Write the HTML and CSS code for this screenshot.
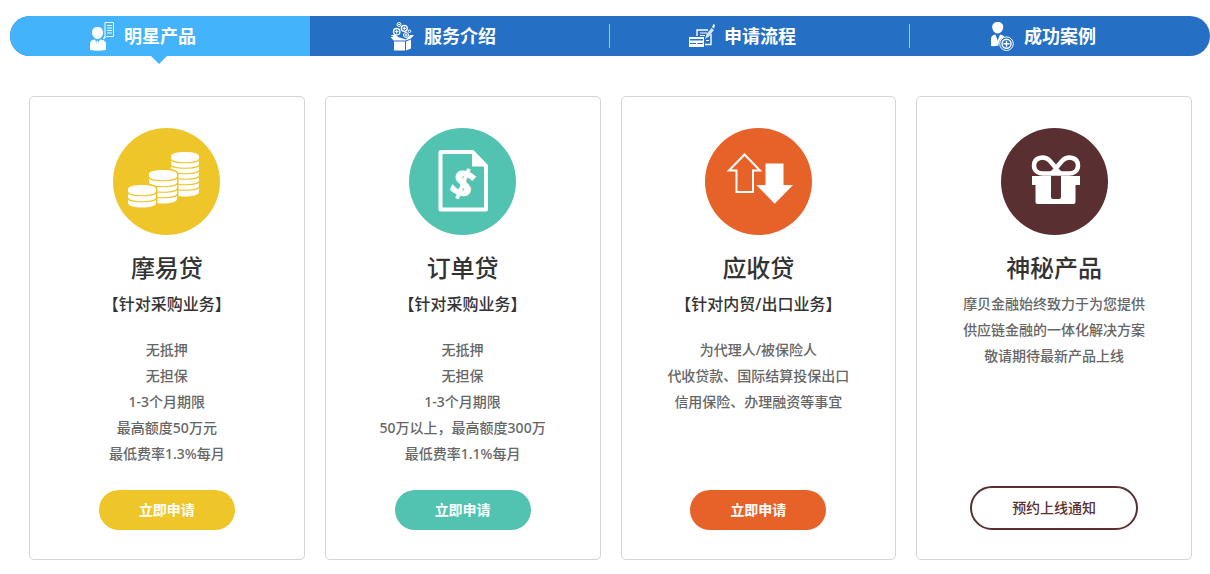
FILE: index.html
```
<!DOCTYPE html>
<html lang="zh-CN">
<head>
    <meta charset="UTF-8">
    <meta name="viewport" content="width=device-width, initial-scale=1.0">
    <title>明星产品</title>
    <link rel="stylesheet" href="styles.css">
</head>
<body>
<nav class="tabs">
    <a class="tab active" href="#products">
        <svg class="tab-icon" viewBox="0 0 26 30" fill="#fff" aria-hidden="true">
            <path d="M8.500 6c3.500 0 5.500 2 5.500 5.500s-2.500 6.500-5.500 6.500S3 15 3 11.500 5 6 8.500 6z"/>
            <path d="M1 29v-6c0-3 2-4 5-4.500l2.500 6 2.500-6c3.500.5 6 1.500 6 4.500v6q-8 1.500-16 0z"/>
            <path d="M8.500 19.500l1.200 1.300-.8 5h-.8l-.8-5z"/>
            <path d="M16 1.500h8.500v14h-7L14.500 18l1.500-3.500z" fill="none" stroke="#fff"/>
            <path d="M18 4.500h5M18 7h5M18 9.500h5M18 12h5" stroke="#fff"/>
        </svg>
        <span class="tab-text">明星产品</span>
    </a>
    <a class="tab" href="#services">
        <svg class="tab-icon" viewBox="0 0 26 30" fill="#fff" aria-hidden="true">
            <path d="M5 20.500h11v9H5zM17 20.500l5-2v9l-5 2zM1.500 14h5.500l2 2 8 2.500 4-4.500h4l-3 3.500-5.500 2H4.500l-3-3.500h3z"/>
            <g fill="none" stroke="#fff">
                <circle cx="10" cy="3.500" r="2"/>
                <circle cx="7.700" cy="10.700" r="3.200" stroke-width="1.300"/>
                <circle cx="15.300" cy="7.300" r="3" stroke-width="1.300"/>
                <circle cx="20.500" cy="10.200" r="1.300"/>
                <circle cx="17" cy="14" r="2.500"/>
                <path d="M5.700 10.700h4M7.700 8.700v4M13.500 7.300h3.600M15.300 5.500v3.600M15.500 14h3M17 12.500v3M9 3.500h2"/>
            </g>
        </svg>
        <span class="tab-text">服务介绍</span>
    </a>
    <a class="tab" href="#process">
        <svg class="tab-icon" viewBox="0 0 26 30" fill="#fff" aria-hidden="true">
            <path d="M8 15V9h11M22 13v10.500h-6" fill="none" stroke="#fff" stroke-width="1.400"/>
            <path d="M11 12h7M11 14.500h5M17 19.500h3" fill="none" stroke="#fff"/>
            <path d="M16 18l1.500-5 5-6 2.500 2-5 6.500z" opacity=".8"/>
            <path d="M23 6l1.500-3 1.500 1-1 3.500z"/>
            <path fill-rule="evenodd" d="M0 16h15v10H0zM1 18v1.500h13V18zM1 22v1h6v-1zM8.500 22v1H14v-1z"/>
        </svg>
        <span class="tab-text">申请流程</span>
    </a>
    <a class="tab" href="#cases">
        <svg class="tab-icon" viewBox="0 0 26 30" fill="#fff" aria-hidden="true">
            <path d="M8.700 1c3.500 0 5.500 2 5.500 5s-2.500 6.500-5.500 6.500S3.200 9 3.200 6s2-5 5.500-5z"/>
            <path d="M2 25v-7c0-3 2-4 4.500-4.500l2.200 6 2.300-6c2.500.5 4 1 4.500 2.500-3.500 1-6 4-6 8.500q-4 1-7.500.5z"/>
            <circle cx="17.500" cy="22.700" r="6.800" fill="none" stroke="#fff"/>
            <circle cx="17.500" cy="22.700" r="5.200"/>
            <circle cx="17.500" cy="22.700" r="3.800" fill="#256fc4"/>
            <path d="M14.500 22.700h6M17.500 19.700v6" stroke="#fff" stroke-width="1.400"/>
        </svg>
        <span class="tab-text">成功案例</span>
    </a>
</nav>

<main class="cards" id="products">
    <section class="card yellow">
        <svg class="card-icon" viewBox="0 0 107 107" aria-hidden="true">
            <circle cx="53.500" cy="53.500" r="53.500" fill="#eec629"/>
            <!-- tall, middle and short stack, each overlapping the one behind -->
            <g fill="#fff" stroke="#eec629" stroke-width="1.200">
                <path d="M58 28c0-5.500 28-5.500 28 0v36c0 6-28 6-28 0z" stroke="none"/>
                <path d="M58 31c0 5 28 5 28 0M58 36.500c0 5 28 5 28 0M58 42c0 5 28 5 28 0M58 47.500c0 5 28 5 28 0M58 53c0 5 28 5 28 0M58 58.500c0 5 28 5 28 0" fill="none"/>
                <path d="M36 46c0-5.500 28-5.500 28 0v25c0 6-28 6-28 0z" stroke-width="3" paint-order="stroke"/>
                <path d="M36 49c0 5 28 5 28 0M36 55c0 5 28 5 28 0M36 60.500c0 5 28 5 28 0M36 66c0 5 28 5 28 0" fill="none"/>
                <path d="M15 61c0-5.500 28-5.500 28 0v14c0 6-28 6-28 0z" stroke-width="3" paint-order="stroke"/>
                <path d="M15 64c0 5 28 5 28 0M15 70c0 5 28 5 28 0" fill="none"/>
            </g>
        </svg>
        <h2>摩易贷</h2>
        <h3>【针对采购业务】</h3>
        <ul>
            <li>无抵押</li>
            <li>无担保</li>
            <li>1-3个月期限</li>
            <li>最高额度50万元</li>
            <li>最低费率1.3%每月</li>
        </ul>
        <button type="button" class="btn">立即申请</button>
    </section>

    <section class="card green">
        <svg class="card-icon" viewBox="0 0 107 107" aria-hidden="true">
            <circle cx="53.500" cy="53.500" r="53.500" fill="#52c3b1"/>
            <path d="M31.500 24h32L77 38v43.500H31.500z" fill="none" stroke="#fff" stroke-width="4" stroke-linejoin="round"/>
            <path d="M63 23l15 15.500H63z" fill="#fff"/>
            <text class="dollar" x="54" y="69" transform="rotate(22 54 55)">$</text>
        </svg>
        <h2>订单贷</h2>
        <h3>【针对采购业务】</h3>
        <ul>
            <li>无抵押</li>
            <li>无担保</li>
            <li>1-3个月期限</li>
            <li>50万以上，最高额度300万</li>
            <li>最低费率1.1%每月</li>
        </ul>
        <button type="button" class="btn">立即申请</button>
    </section>

    <section class="card orange">
        <svg class="card-icon" viewBox="0 0 107 107" aria-hidden="true">
            <circle cx="53.500" cy="53.500" r="53.500" fill="#e76228"/>
            <path d="M39.500 26.500L55 42.500H48V64H31.500V42.500H24z" fill="none" stroke="#fff" stroke-width="2"/>
            <path d="M60.500 35.500h18V57H88L69.700 75.700 51.300 57h9.200z" fill="#fff"/>
        </svg>
        <h2>应收贷</h2>
        <h3>【针对内贸/出口业务】</h3>
        <ul>
            <li>为代理人/被保险人</li>
            <li>代收贷款、国际结算投保出口</li>
            <li>信用保险、办理融资等事宜</li>
        </ul>
        <button type="button" class="btn">立即申请</button>
    </section>

    <section class="card brown">
        <svg class="card-icon" viewBox="0 0 107 107" aria-hidden="true">
            <circle cx="53.500" cy="53.500" r="53.500" fill="#592f31"/>
            <path d="M31 48h48v9h-4.500v17q0 2-2 2h-36q-2 0-2-2V57H31z" fill="#fff"/>
            <path d="M50 48h10v21q0 2-2 2h-6q-2 0-2-2z" fill="#592f31"/>
            <path d="M55 40L49 33C43 27 33 29.500 33 37.500c0 6 5 8 9 8h26c4 0 9-2 9-8 0-8-10-10.500-16-4.500z" fill="none" stroke="#fff" stroke-width="4.500"/>
            <path d="M46 47l9-9 9 9z" fill="#fff"/>
        </svg>
        <h2>神秘产品</h2>
        <p>摩贝金融始终致力于为您提供<br>供应链金融的一体化解决方案<br>敬请期待最新产品上线</p>
        <button type="button" class="btn btn-outline">预约上线通知</button>
    </section>
</main>
</body>
</html>
```
FILE: styles.css
```
body {
    margin: 0;
    background-color: #ffffff;
    color: #666666;
    font-family: "Noto Sans", "Noto Sans CJK SC", sans-serif;
    font-size: 14px;
    font-weight: 500;
    line-height: 26px;
}
/* Tab bar */
.tabs {
    display: flex;
    margin: 16px 0 0 10px;
    border-radius: 20px;
    background-color: #256fc4;
}
.tab {
    position: relative;
    flex: 1;
    display: grid;
    grid-template-columns: 1fr auto 1fr;
    align-items: center;
    height: 40px;
    color: #ffffff;
    font-size: 18px;
    font-weight: bold;
    line-height: 40px;
    text-decoration: none;
}
.tab-icon {
    width: 26px;
    height: 30px;
    justify-self: end;
    margin-right: 9px;
}
.tab.active {
    background-color: #43b3fb;
    border-radius: 20px 0 0 20px;
}
.tab.active::after {
    content: "";
    position: absolute;
    top: 100%;
    left: 50%;
    margin-left: -9px;
    border: 8px solid transparent;
    border-top-color: #43b3fb;
    border-bottom: 0;
}
/* Divider between the inactive tabs */
.tab:not(.active) + .tab::before {
    content: "";
    position: absolute;
    top: 8px;
    bottom: 8px;
    left: -1px;
    width: 1px;
    background-color: #a8c5e7;
}
/* Product cards */
.cards {
    display: flex;
    gap: 20px;
    margin: 40px 18px 14px 29px;
}
.card {
    flex: 1;
    display: flex;
    flex-direction: column;
    align-items: center;
    padding: 31px 0 29px;
    border: 1px solid #d4d4d4;
    border-radius: 5px;
    text-align: center;
}
.card-icon {
    width: 107px;
    height: 107px;
}
.dollar {
    fill: #ffffff;
    stroke: #ffffff;
    font-family: "Noto Sans", sans-serif;
    font-size: 38px;
    font-weight: bold;
    text-anchor: middle;
}
.card h2 {
    margin: 15px 0 5px;
    color: #333333;
    font-size: 24px;
    font-weight: 500;
    line-height: 36px;
}
.card h3 {
    margin: 0 0 20px;
    color: #333333;
    font-size: 16px;
    font-weight: 500;
    line-height: 26px;
}
.card ul {
    margin: 0 0 23px;
    padding: 0;
    list-style: none;
}
.card p {
    margin: 0;
}
.btn {
    margin-top: auto;
    padding: 0 40px 2px;
    height: 40px;
    border: none;
    border-radius: 22px;
    color: #ffffff;
    font-family: inherit;
    font-size: 14px;
    font-weight: bold;
    cursor: pointer;
}
.yellow .btn {
    background-color: #eec629;
}
.green .btn {
    background-color: #52c3b1;
}
.orange .btn {
    background-color: #e76228;
}
.btn-outline {
    height: 44px;
    border: 2px solid #592f31;
    background-color: #ffffff;
    color: #592f31;
    font-weight: 500;
}
```
